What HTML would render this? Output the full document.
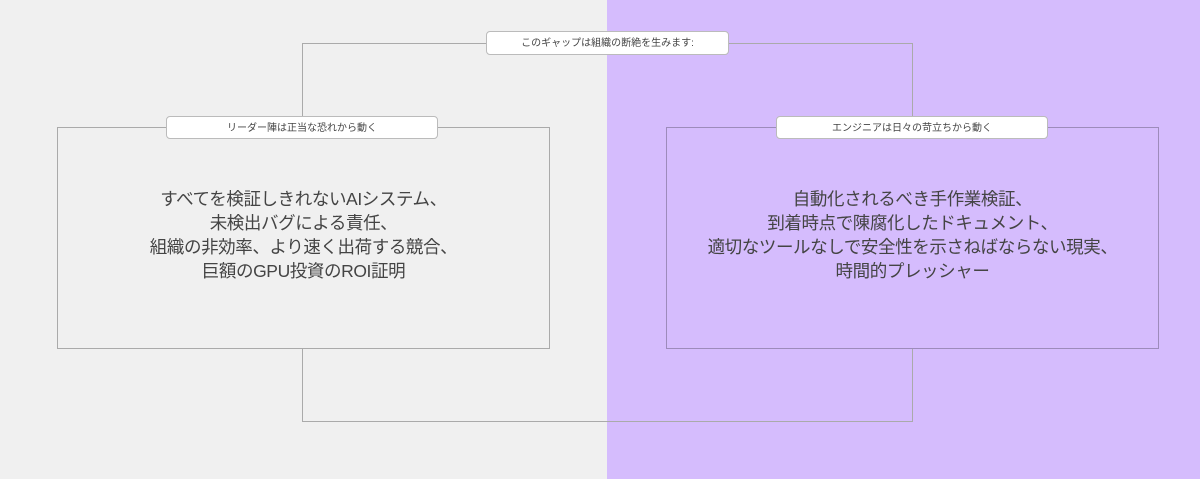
<!DOCTYPE html><html><head><meta charset="utf-8"><style>
body{margin:0;width:1200px;height:479px;position:relative;overflow:hidden;font-family:"Liberation Sans","Noto Sans CJK JP",sans-serif;background:#f0f0f0}
.r{position:absolute;left:607px;top:0;width:593px;height:479px;background:#d5bcfd}
.b{position:absolute;border:1px solid #aaa}
.l{position:absolute;background:#fff;border:1px solid #bbb;border-radius:4px;font-size:10px;color:#444;text-align:center;box-sizing:border-box}
.t{position:absolute;font-size:17.5px;line-height:24px;color:#444;text-align:center;letter-spacing:-0.4px}
</style></head><body>
<div class="r"></div>
<div class="b" style="left:302px;top:43px;width:609px;height:377px;border-color:#aaa"></div>
<div class="b" style="left:57px;top:127px;width:491px;height:220px;background:#f0f0f0"></div>
<div class="b" style="left:666px;top:127px;width:491px;height:220px;background:#d5bcfd;border-color:#9d8bbb"></div>
<div class="l" style="left:486px;top:31px;width:243px;height:24px;line-height:24px">このギャップは組織の断絶を生みます:</div>
<div class="l" style="left:166px;top:116px;width:272px;height:23px;line-height:23px">リーダー陣は正当な恐れから動く</div>
<div class="l" style="left:776px;top:116px;width:272px;height:23px;line-height:23px">エンジニアは日々の苛立ちから動く</div>
<div class="t" style="left:57px;top:187px;width:493px">すべてを検証しきれないAIシステム、<br>未検出バグによる責任、<br>組織の非効率、より速く出荷する競合、<br>巨額のGPU投資のROI証明</div>
<div class="t" style="left:666px;top:187px;width:493px">自動化されるべき手作業検証、<br>到着時点で陳腐化したドキュメント、<br>適切なツールなしで安全性を示さねばならない現実、<br>時間的プレッシャー</div>
</body></html>
